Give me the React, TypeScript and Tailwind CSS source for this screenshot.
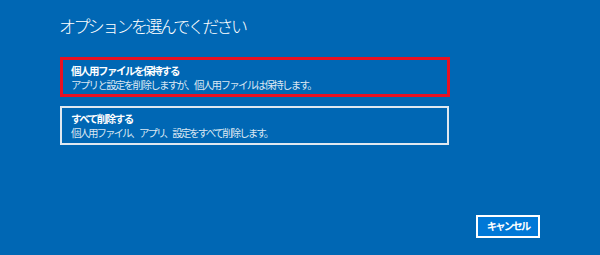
export default function App() {
  const font = { fontFamily: '"Noto Sans CJK JP", "Noto Sans", sans-serif' };
  return (
    <div className="w-[600px] h-[255px] bg-[#0067b4] text-white flex flex-col" style={font}>
      <div className="pl-[59px] pt-[13px]">
        <h1 className="text-[17px] leading-[26px] font-light tracking-[-2.6px]">オプションを選んでください</h1>
      </div>

      <div className="pl-[60px] pt-[18px] flex flex-col gap-[9px]">
        {/* Keep personal files (highlighted) */}
        <div className="w-[390px] h-[40px] border-[3px] border-[#e81123] pl-[8px] flex flex-col justify-center gap-[1px]">
          <div className="text-[10.5px] leading-[13px] font-bold tracking-[-1.5px]">個人用ファイルを保持する</div>
          <div className="text-[10.5px] leading-[13px] text-[#d9e6f2] tracking-[-1.7px]">アプリと設定を削除しますが、個人用ファイルは保持します。</div>
        </div>

        {/* Remove everything */}
        <div className="w-[389px] h-[39px] border-2 border-[#dfe8f0] pl-[9px] flex flex-col justify-center gap-[1px]">
          <div className="text-[10.5px] leading-[13px] font-bold tracking-[-1.5px]">すべて削除する</div>
          <div className="text-[10.5px] leading-[13px] text-[#d9e6f2] tracking-[-2px]">個人用ファイル、アプリ、設定をすべて削除します。</div>
        </div>
      </div>

      <div className="mt-auto pb-[17px] pr-[60px] flex justify-end">
        <button className="w-[64px] h-[23px] border-2 border-white bg-[#0078d7] text-[10.5px] font-bold leading-none tracking-[-2px]">
          キャンセル
        </button>
      </div>
    </div>
  );
}
